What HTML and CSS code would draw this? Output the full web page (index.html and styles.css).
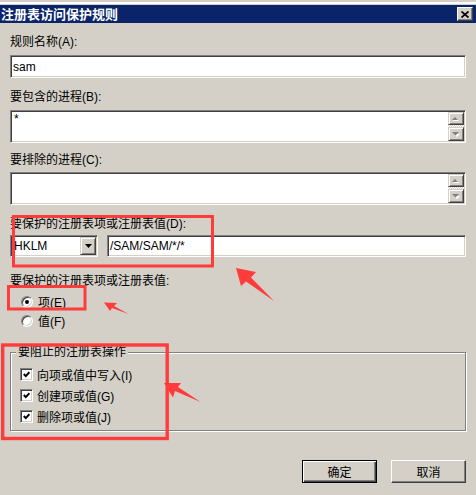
FILE: index.html
```html
<!DOCTYPE html>
<html lang="zh-CN">
<head>
<meta charset="utf-8">
<title>注册表访问保护规则</title>
<link rel="stylesheet" href="styles.css">
</head>
<body>
<div class="window">
  <div class="frame-top"></div>
  <div class="titlebar">
    <span class="title">注册表访问保护规则</span>
    <span class="close">
      <svg width="8" height="7" viewBox="0 0 8 7"><path d="M0.5 0.5 L7.5 6.5 M7.5 0.5 L0.5 6.5" stroke="#000" stroke-width="1.7" fill="none"/></svg>
    </span>
  </div>
  <div class="content">
    <div class="label l-a">规则名称(A):</div>
    <div class="sunken field input-a">sam</div>

    <div class="label l-b">要包含的进程(B):</div>
    <div class="sunken textarea ta-b">
      <div class="ta-text">*</div>
      <div class="vscroll">
        <span class="sbtn up"><svg width="8" height="5" viewBox="0 0 8 5"><polygon points="1,5 4,2 7,5" fill="#fff"/><polygon points="0,4 3,1 6,4" fill="#808080"/></svg></span>
        <span class="track"></span>
        <span class="sbtn down"><svg width="8" height="5" viewBox="0 0 8 5"><polygon points="1,1 7,1 4,4" fill="#fff" transform="translate(1,1)"/><polygon points="0,0 7,0 3.5,3.5" fill="#808080"/></svg></span>
      </div>
    </div>

    <div class="label l-c">要排除的进程(C):</div>
    <div class="sunken textarea ta-c">
      <div class="ta-text"></div>
      <div class="vscroll">
        <span class="sbtn up"><svg width="8" height="5" viewBox="0 0 8 5"><polygon points="1,5 4,2 7,5" fill="#fff"/><polygon points="0,4 3,1 6,4" fill="#808080"/></svg></span>
        <span class="track"></span>
        <span class="sbtn down"><svg width="8" height="5" viewBox="0 0 8 5"><polygon points="1,1 7,1 4,4" fill="#fff" transform="translate(1,1)"/><polygon points="0,0 7,0 3.5,3.5" fill="#808080"/></svg></span>
      </div>
    </div>

    <div class="label l-d">要保护的注册表项或注册表值(D):</div>
    <div class="keyrow">
      <div class="sunken combo">
        <span>HKLM</span>
        <span class="dropbtn"><svg width="7" height="4" viewBox="0 0 7 4"><polygon points="0,0 7,0 3.5,4" fill="#000"/></svg></span>
      </div>
      <div class="sunken field keypath">/SAM/SAM/*/*</div>
    </div>

    <div class="label l-e">要保护的注册表项或注册表值:</div>
    <div class="radios">
      <div class="radio-row"><span class="radio checked"></span><span>项(E)</span></div>
      <div class="radio-row"><span class="radio"></span><span>值(F)</span></div>
    </div>

    <div class="group">
      <span class="group-title">要阻止的注册表操作</span>
      <div class="check-row"><span class="checkbox"><svg width="7" height="7" viewBox="0 0 7 7"><polyline points="0.8,3 2.8,5.2 6.4,1.2" stroke="#000" stroke-width="1.9" fill="none"/></svg></span><span>向项或值中写入(I)</span></div>
      <div class="check-row"><span class="checkbox"><svg width="7" height="7" viewBox="0 0 7 7"><polyline points="0.8,3 2.8,5.2 6.4,1.2" stroke="#000" stroke-width="1.9" fill="none"/></svg></span><span>创建项或值(G)</span></div>
      <div class="check-row"><span class="checkbox"><svg width="7" height="7" viewBox="0 0 7 7"><polyline points="0.8,3 2.8,5.2 6.4,1.2" stroke="#000" stroke-width="1.9" fill="none"/></svg></span><span>删除项或值(J)</span></div>
    </div>

    <div class="buttons">
      <div class="btn btn-default">确定</div>
      <div class="btn">取消</div>
    </div>
  </div>

  <svg class="annot" width="476" height="495" viewBox="0 0 476 495">
    <g fill="none" stroke="#ff3b3b" stroke-width="3">
      <rect x="13.5" y="216.5" width="199" height="49.5"/>
      <rect x="8.5" y="286.5" width="76.5" height="22.5"/>
      <rect x="2.7" y="345" width="164.5" height="93.5" stroke-width="3.4"/>
    </g>
    <g fill="#ff3b3b">
      <polygon points="236,268 256,272 251,277.5 274,301 246,281.5 241,286"/>
      <polygon points="104,302.5 117,303 114,306 128.5,314 112,308 110,311"/>
      <polygon points="164,383 181,383 178,387 200.5,402 175,391 173,397.5"/>
    </g>
  </svg>
</div>
</body>
</html>
```
FILE: styles.css
```css
* { box-sizing: border-box; }
html, body { margin: 0; padding: 0; }
body {
  width: 476px;
  height: 495px;
  overflow: hidden;
  background: #d4d0c8;
  font-family: "Liberation Sans", "Noto Sans CJK SC", sans-serif;
  font-size: 12px;
  color: #000;
}
.window {
  position: relative;
  width: 476px;
  height: 495px;
  background: #d4d0c8;
}
.frame-top {
  height: 5px;
  background: linear-gradient(#d4d0c8 0 2px, #ffffff 2px 4px, #d4d0c8 4px);
}
.titlebar {
  height: 18px;
  background: #0a246a;
  display: flex;
  align-items: center;
  justify-content: space-between;
  padding: 0 3px 0 1px;
}
.title {
  color: #fff;
  font-family: "Noto Sans CJK SC", sans-serif;
  font-weight: bold;
  font-size: 13px;
  line-height: 18px;
  white-space: nowrap;
}
.close {
  width: 16px;
  height: 14px;
  display: flex;
  align-items: center;
  justify-content: center;
  background: #d4d0c8;
  border: 1px solid;
  border-color: #fff #404040 #404040 #fff;
  box-shadow: inset -1px -1px 0 #808080;
}
.close svg { display: block; }

.content { padding: 0 10px; }
.label {
  height: 14px;
  line-height: 14px;
  white-space: nowrap;
}
.l-a { margin-top: 12px; }
.l-b { margin-top: 12px; }
.l-c { margin-top: 10px; }
.l-d { margin-top: 12px; }
.l-e { margin-top: 17px; }

.sunken {
  background: #fff;
  border: 1px solid;
  border-color: #808080 #fff #fff #808080;
  box-shadow: inset 1px 1px 0 #404040, inset -1px -1px 0 #d4d0c8;
}
.field {
  height: 23px;
  display: flex;
  align-items: center;
  padding: 0 2px;
  white-space: nowrap;
}
.input-a { margin-top: 6px; }

.textarea {
  height: 33px;
  display: flex;
  padding: 1px;
}
.ta-b { margin-top: 6px; }
.ta-c { margin-top: 5px; }
.ta-text {
  flex: 1;
  padding: 0 2px;
  line-height: 14px;
}
.vscroll {
  width: 16px;
  display: flex;
  flex-direction: column;
}
.sbtn {
  height: 13px;
  display: flex;
  align-items: center;
  justify-content: center;
  background: #d4d0c8;
  border: 1px solid;
  border-color: #d4d0c8 #404040 #404040 #d4d0c8;
  box-shadow: inset 1px 1px 0 #fff, inset -1px -1px 0 #808080;
}
.sbtn.down { height: 14px; }
.sbtn svg { display: block; }
.track {
  flex: 1;
  background: repeating-conic-gradient(#fff 0 25%, #d4d0c8 0 50%) 0 0 / 2px 2px;
}

.keyrow {
  display: flex;
  gap: 9px;
  height: 22px;
  margin-top: 4px;
}
.combo {
  width: 88px;
  height: 22px;
  display: flex;
  align-items: center;
  justify-content: space-between;
  padding: 1px 1px 1px 3px;
}
.dropbtn {
  width: 16px;
  height: 18px;
  display: flex;
  align-items: center;
  justify-content: center;
  background: #d4d0c8;
  border: 1px solid;
  border-color: #d4d0c8 #404040 #404040 #d4d0c8;
  box-shadow: inset 1px 1px 0 #fff, inset -1px -1px 0 #808080;
}
.dropbtn svg { display: block; }
.keypath { flex: 1; height: 22px; }

.radios { margin-top: 4px; padding-left: 11px; }
.radio-row {
  height: 19px;
  display: flex;
  align-items: center;
  gap: 5px;
}
.radio {
  width: 12px;
  height: 12px;
  border-radius: 50%;
  background: #fff;
  border: 1px solid;
  border-color: #808080 #fff #fff #808080;
  box-shadow: inset 1px 1px 0 #404040, inset -1px -1px 0 #d4d0c8;
  display: flex;
  align-items: center;
  justify-content: center;
}
.radio.checked::after {
  content: "";
  width: 4px;
  height: 4px;
  border-radius: 50%;
  background: #000;
}

.group {
  position: relative;
  margin-top: 22px;
  border: 1px solid #808080;
  box-shadow: 1px 1px 0 #fff, inset 1px 1px 0 #fff;
  padding: 11px 0 3px 9px;
}
.group-title {
  position: absolute;
  top: -8px;
  left: 5px;
  padding: 0 2px;
  line-height: 14px;
  background: #d4d0c8;
  white-space: nowrap;
}
.check-row {
  height: 21px;
  display: flex;
  align-items: center;
  gap: 4px;
}
.checkbox {
  width: 13px;
  height: 13px;
  background: #fff;
  border: 1px solid;
  border-color: #808080 #fff #fff #808080;
  box-shadow: inset 1px 1px 0 #404040, inset -1px -1px 0 #d4d0c8;
  display: flex;
  align-items: center;
  justify-content: center;
}
.checkbox svg { display: block; }

.buttons {
  display: flex;
  justify-content: flex-end;
  gap: 14px;
  margin-top: 29px;
}
.btn {
  width: 75px;
  height: 23px;
  display: flex;
  align-items: center;
  justify-content: center;
  background: #d4d0c8;
  border: 1px solid;
  border-color: #fff #404040 #404040 #fff;
  box-shadow: inset -1px -1px 0 #808080;
  font-family: "Noto Sans CJK SC", sans-serif;
}
.btn-default {
  border: 1px solid #000;
  box-shadow: inset 1px 1px 0 #fff, inset -1px -1px 0 #404040, inset -2px -2px 0 #808080;
}

.annot {
  position: absolute;
  top: 0;
  left: 0;
  pointer-events: none;
}
```
